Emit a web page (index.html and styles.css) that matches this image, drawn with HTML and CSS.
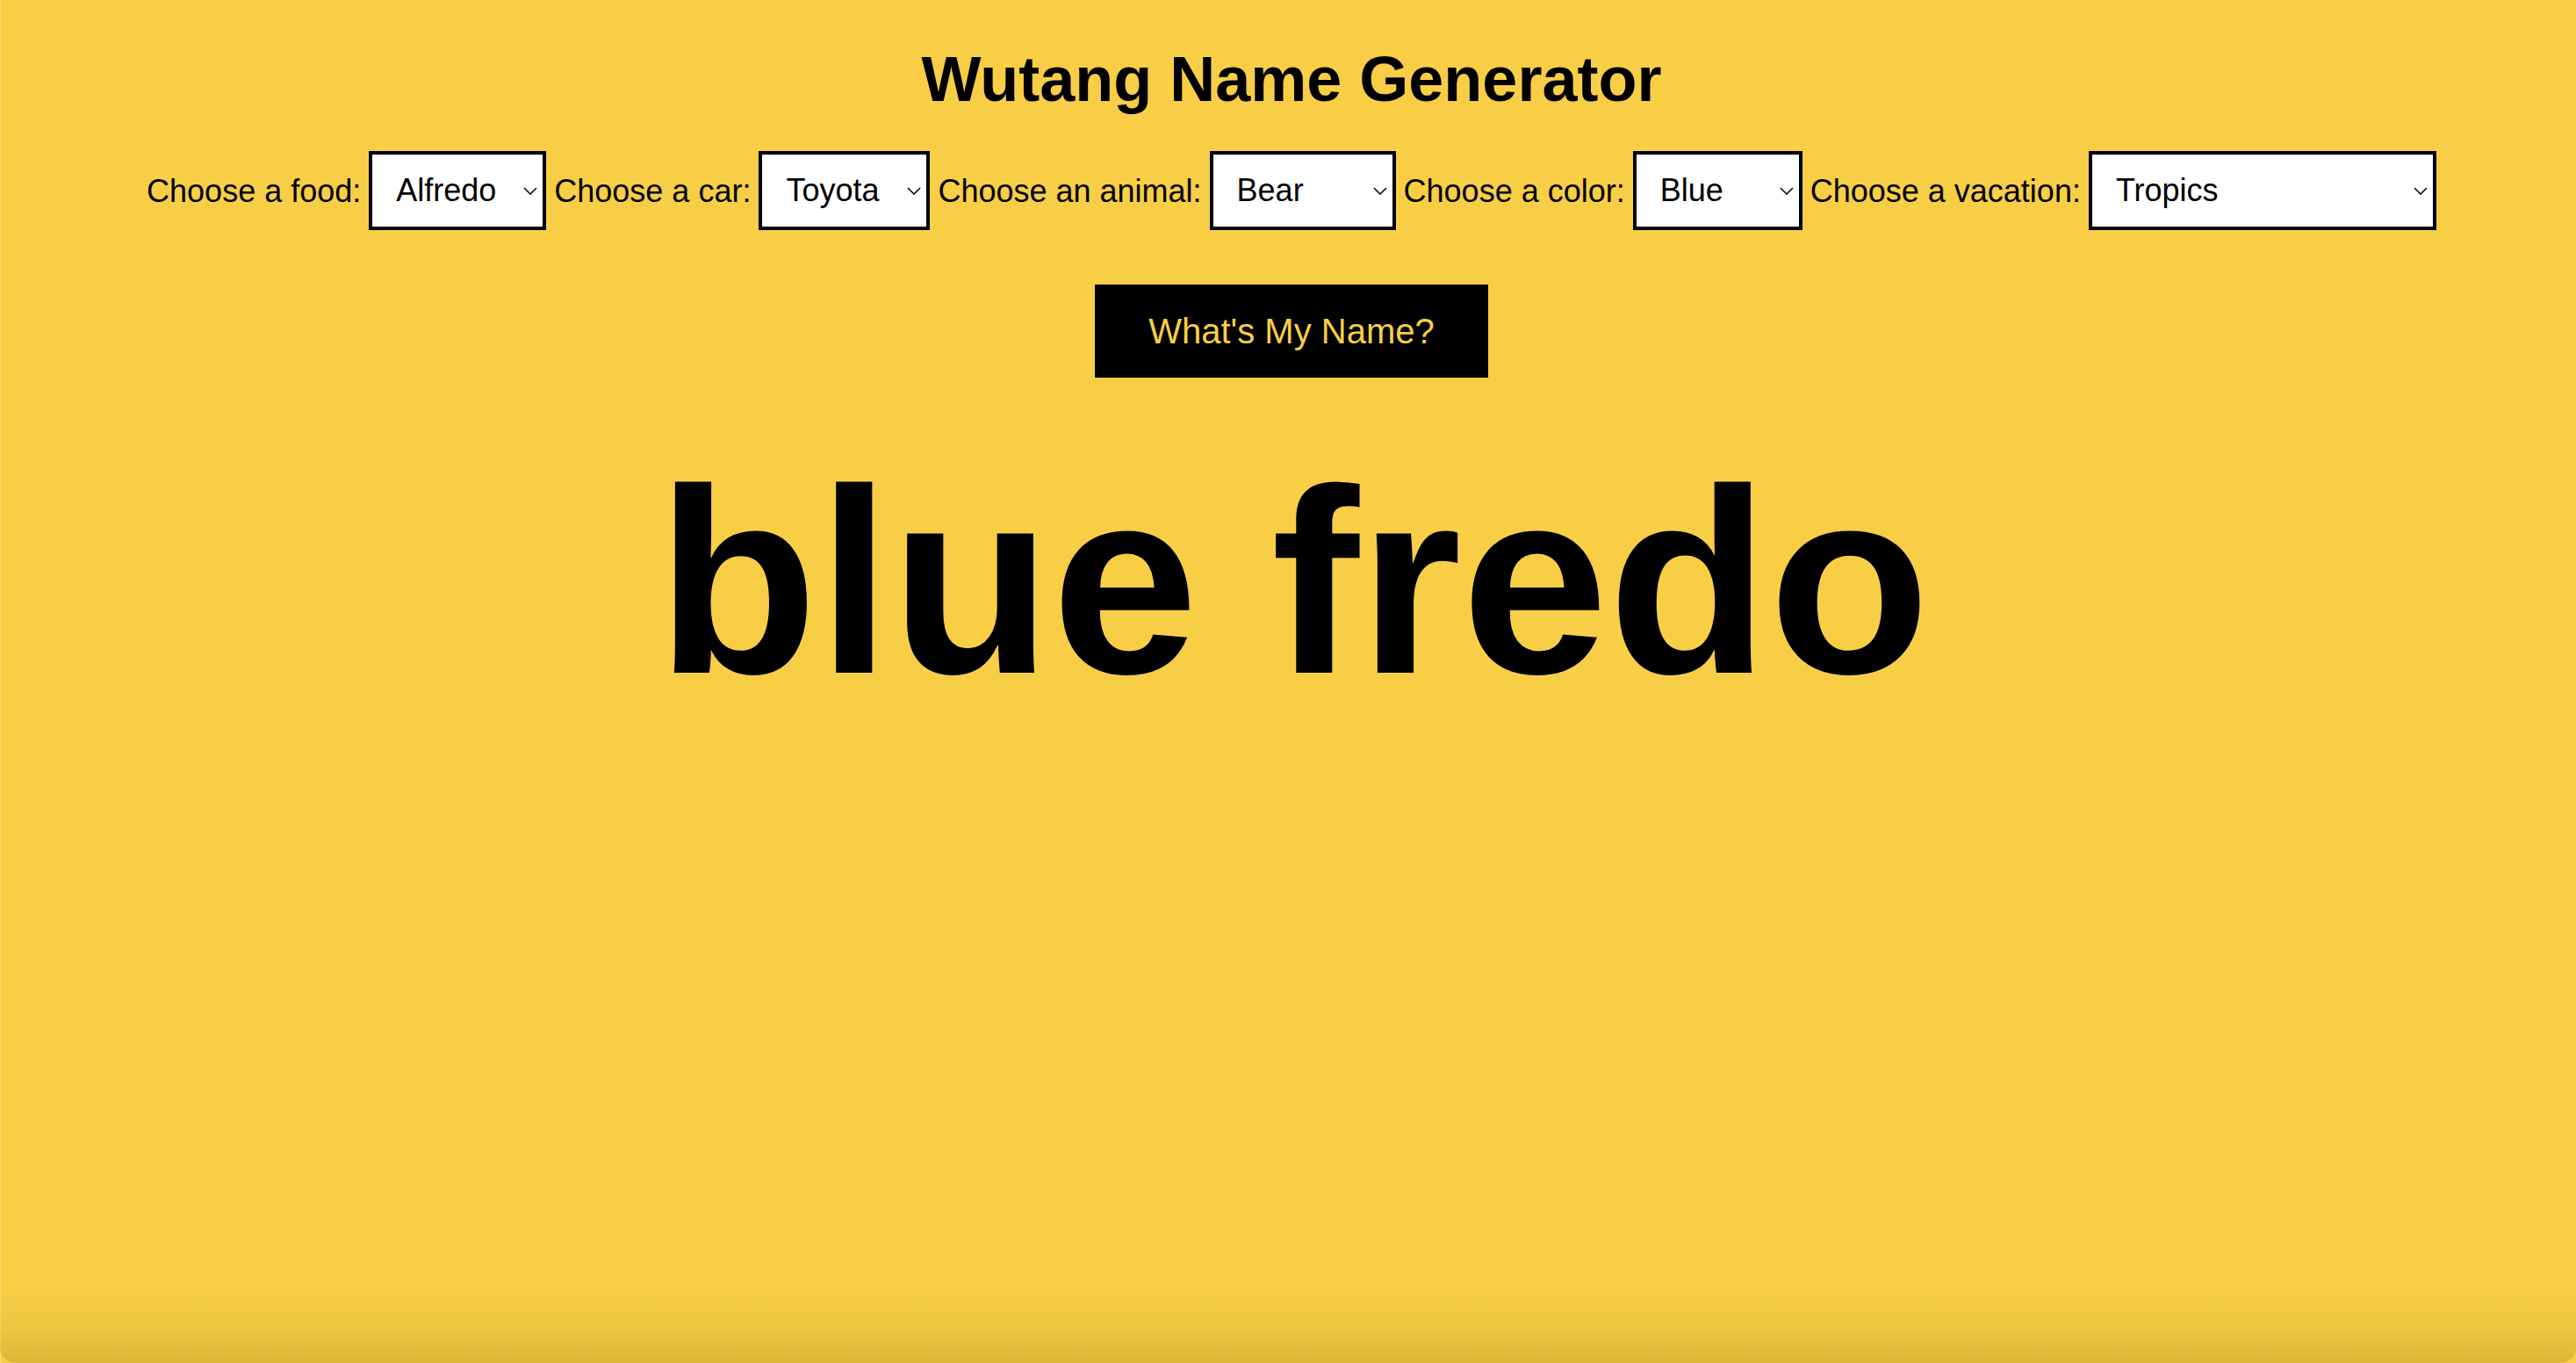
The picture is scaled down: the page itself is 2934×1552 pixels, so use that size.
FILE: index.html
```html
<!DOCTYPE html>
<html lang="en">
<head>
<meta charset="utf-8">
<title>Wutang Name Generator</title>
<link rel="stylesheet" href="styles.css">
</head>
<body>
<main class="page">
  <h1 class="title">Wutang Name Generator</h1>
  <form class="choices">
    <label class="choice-label" for="food">Choose a food:</label>
    <span class="select-wrap sel-food">
      <select id="food" class="choice-select"><option>Alfredo</option></select>
      <svg class="chevron" viewBox="0 0 16 9" aria-hidden="true"><path d="M1 1 L8 8 L15 1" fill="none" stroke="#000" stroke-width="1.5"/></svg>
    </span>
    <label class="choice-label" for="car">Choose a car:</label>
    <span class="select-wrap sel-car">
      <select id="car" class="choice-select"><option>Toyota</option></select>
      <svg class="chevron" viewBox="0 0 16 9" aria-hidden="true"><path d="M1 1 L8 8 L15 1" fill="none" stroke="#000" stroke-width="1.5"/></svg>
    </span>
    <label class="choice-label" for="animal">Choose an animal:</label>
    <span class="select-wrap sel-animal">
      <select id="animal" class="choice-select"><option>Bear</option></select>
      <svg class="chevron" viewBox="0 0 16 9" aria-hidden="true"><path d="M1 1 L8 8 L15 1" fill="none" stroke="#000" stroke-width="1.5"/></svg>
    </span>
    <label class="choice-label" for="color">Choose a color:</label>
    <span class="select-wrap sel-color">
      <select id="color" class="choice-select"><option>Blue</option></select>
      <svg class="chevron" viewBox="0 0 16 9" aria-hidden="true"><path d="M1 1 L8 8 L15 1" fill="none" stroke="#000" stroke-width="1.5"/></svg>
    </span>
    <label class="choice-label" for="vacation">Choose a vacation:</label>
    <span class="select-wrap sel-vacation">
      <select id="vacation" class="choice-select"><option>Tropics</option></select>
      <svg class="chevron" viewBox="0 0 16 9" aria-hidden="true"><path d="M1 1 L8 8 L15 1" fill="none" stroke="#000" stroke-width="1.5"/></svg>
    </span>
  </form>
  <button class="name-btn" type="button">What's My Name?</button>
  <div class="result">blue fredo</div>
</main>
<div class="window-shade" aria-hidden="true"></div>
</body>
</html>
```
FILE: styles.css
```css
html, body {
  margin: 0;
  padding: 0;
  background: #f7ce46;
  min-height: 100%;
}

body {
  font-family: "Liberation Sans", Arial, Helvetica, sans-serif;
  color: #000;
  min-height: 100vh;
  border-left: 1px solid #fadc74;
  box-sizing: border-box;
}

.page {
  display: flex;
  flex-direction: column;
  align-items: center;
  padding-top: 49px;
  padding-left: 7px;
}

.title {
  margin: 0;
  font-size: 72px;
  font-weight: 700;
  line-height: 83px;
}

.choices {
  margin-top: 40px;
  display: flex;
  align-items: center;
  justify-content: center;
  gap: 9px;
}

.choice-label {
  font-size: 36px;
  line-height: 41px;
  white-space: nowrap;
}

.select-wrap {
  position: relative;
  display: block;
}

.choice-select {
  -webkit-appearance: none;
  appearance: none;
  display: block;
  box-sizing: border-box;
  width: 100%;
  height: 90px;
  margin: 0;
  padding: 20px 40px 20px 27px;
  border: 4px solid #000;
  border-radius: 0;
  background: #fff;
  color: #000;
  font-family: "Liberation Sans", Arial, Helvetica, sans-serif;
  font-size: 36px;
  line-height: 42px;
  outline: none;
}

.sel-food { width: 202px; }
.sel-car { width: 195px; }
.sel-animal { width: 212px; }
.sel-color { width: 193px; }
.sel-vacation { width: 396px; }

.chevron {
  position: absolute;
  right: 10px;
  top: 41px;
  width: 16px;
  height: 9px;
  pointer-events: none;
}

.name-btn {
  margin-top: 62px;
  padding: 30px 61px;
  border: 0;
  border-radius: 0;
  background: #000;
  color: #f7ce46;
  font-family: "Liberation Sans", Arial, Helvetica, sans-serif;
  font-size: 40px;
  line-height: 46px;
  cursor: pointer;
}

.result {
  margin-top: 60px;
  font-size: 300px;
  font-weight: 700;
  line-height: 345px;
  padding-left: 4px;
}

.window-shade {
  position: fixed;
  left: 0;
  right: 0;
  bottom: 0;
  height: 90px;
  pointer-events: none;
  background: linear-gradient(to bottom, rgba(120, 90, 0, 0) 0%, rgba(120, 90, 0, 0.05) 50%, rgba(120, 90, 0, 0.2) 100%);
  border-radius: 0 0 18px 18px;
}
```
